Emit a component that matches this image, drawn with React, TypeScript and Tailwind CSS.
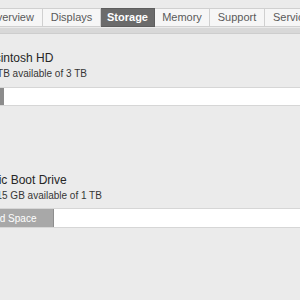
import React, { FC } from 'react';

const tabs = [
  { label: 'Overview', w: 'w-[63px] justify-center' },
  { label: 'Displays', w: 'w-[58px] justify-center' },
  { label: 'Storage', w: 'w-[54px] justify-center', active: true },
  { label: 'Memory', w: 'w-[55px] justify-center' },
  { label: 'Support', w: 'w-[55px] justify-center' },
  { label: 'Services', w: 'w-[64px] justify-start pl-[8px]' },
];

const Tab: FC<{ label: string; w: string; active?: boolean }> = ({ label, w, active }) => (
  <div
    className={`${w} shrink-0 h-[19px] flex items-center text-[11px] border-r border-y ${
      active ? 'bg-[#6b6b6b] border-[#5e5e5e] text-white font-semibold' : 'bg-[#f6f6f6] border-[#d0d0d0] text-[#5a5a5a]'
    }`}
  >
    {label}
  </div>
);

const App: FC = () => {
  return (
    <div className="w-[300px] h-[300px] overflow-hidden bg-[#ebebeb] font-['Liberation_Sans',Arial,sans-serif]">
      <div className="pt-[8px]">
        <div className="flex ml-[-20px]">
          {tabs.map((t) => (
            <Tab key={t.label} {...t} />
          ))}
        </div>
        <div className="mt-[1px] h-[6px] bg-[#d8d8d8] border-b border-[#cdcdcd]" />
      </div>

      <div className="ml-[-22px] pt-[16px]">
        <div className="text-[12px] leading-[16px] text-[#262626]">Macintosh HD</div>
        <div className="mt-[1px] ml-[-3px] text-[10px] leading-[14px] text-[#363636]">2.93 TB available of 3 TB</div>
        <div className="mt-[6px] h-[19px] flex bg-white border-y border-[#d6d6d6]">
          <div className="w-[26px] bg-[#8c8c8c]" />
        </div>

        <div className="mt-[66px] text-[12px] leading-[16px] text-[#262626]">Basic Boot Drive</div>
        <div className="mt-[1px] ml-[-1px] text-[10px] leading-[14px] text-[#363636]">100.15 GB available of 1 TB</div>
        <div className="mt-[5px] h-[20px] flex bg-white border-y border-[#d6d6d6]">
          <div className="w-[76px] bg-[#a8a8a8] border-r border-[#8e8e8e] flex items-center pl-[4px] text-[10px] text-white">
            Used Space
          </div>
        </div>
      </div>
    </div>
  );
};

export default App;
